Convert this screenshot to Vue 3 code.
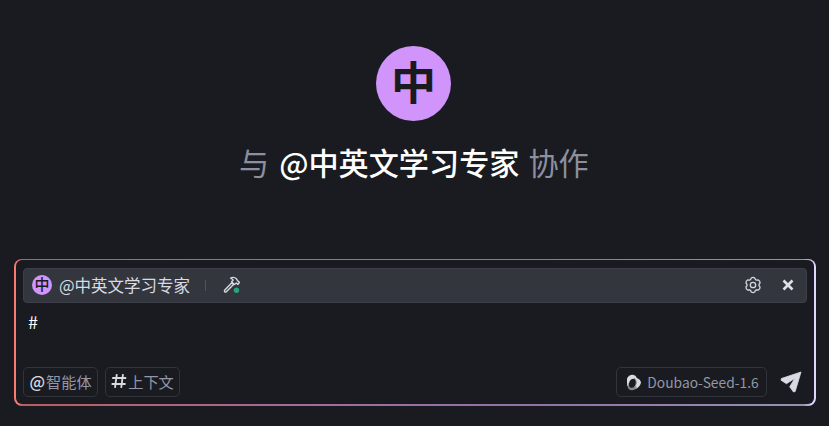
<script setup>
const agent = '中英文学习专家'
</script>

<template>
  <main class="page">
    <div class="avatar">中</div>
    <h1 class="title">
      <span class="with">与</span><strong>@{{ agent }}</strong><span>协作</span>
    </h1>
    <section class="frame">
      <div class="composer">
        <header class="bar">
          <div class="mini">中</div>
          <span class="name">@{{ agent }}</span>
          <i class="sep"></i>
          <svg class="hammer" width="18" height="18" viewBox="0 0 18 18">
            <path d="M1.800 14 8.800 6.800l1.700 1.700-7.200 7.200c-.5.5-1.100.5-1.500 0s-.5-1.200 0-1.700ZM7.600 2.200c2.200-1.300 4.300-.9 5.800.6l1 1.600 2 1.900-1.500 2.200-1.500-1.500-2 1.500-2.800-2.700 1.600-1.700c-.7-1-1.500-1.500-2.600-1.900Z" fill="none" stroke="#d5d8e0" stroke-width="1.400" stroke-linejoin="round" />
            <circle cx="13.500" cy="14.200" r="2.700" fill="#27a77d" />
          </svg>
          <span class="grow"></span>
          <svg class="gear" width="18" height="18" viewBox="0 0 18 18" fill="none" stroke="#d5d8e0" stroke-width="1.300" stroke-linejoin="round">
            <path d="M7.300 2Q9 .9 10.700 2L11.500 3.600 12.600 4.200 14.400 4Q16.200 5 16 7L15 8.400V9.600L16 11Q16.200 13 14.400 14L12.600 13.800 11.500 14.400 10.700 16Q9 17.100 7.300 16L6.500 14.400 5.400 13.800 3.600 14Q1.800 13 2 11L3 9.600V8.400L2 7Q1.800 5 3.600 4L5.400 4.200 6.500 3.600Z" />
            <circle cx="9" cy="9" r="2.700" />
          </svg>
          <svg class="close" width="12" height="12" viewBox="0 0 12 12">
            <path d="m1.500 1.500 9 9M10.500 1.500l-9 9" stroke="#dfe1e8" stroke-width="2.600" />
          </svg>
        </header>
        <div class="input">#</div>
        <footer class="tools">
          <button class="chip">
            <b class="at">@</b><span>智能体</span>
          </button>
          <button class="chip">
            <svg class="hash" width="16" height="16" viewBox="0 0 16 16">
              <path d="M1.200 5h14M.6 11h14M5.800 1.200 4 14.800M12 1.200l-1.800 13.600" stroke="#d9dbe2" stroke-width="1.800" />
            </svg><span>上下文</span>
          </button>
          <span class="grow"></span>
          <button class="chip model">
            <svg width="16" height="17" viewBox="0 0 16 17">
              <path d="M1 12V4.500C2 2 4.500.5 6.800.7 9 1 10.200 2.300 10.700 4c2.200.7 4.300 2.700 4.300 4.700-.8 3.200-3 5.600-6 6.600L6.500 14 3 11.500Z" fill="#d9dbe2" />
              <path d="M2.200 8.500C.5 13 2.500 16.400 6 16.200c2.200-.1 4-1.300 4.700-3L9.500 12 6 13.800 3 12Z" fill="#85878f" />
              <ellipse cx="6.600" cy="9.300" rx="3.500" ry="4.700" transform="rotate(22 6.600 9.300)" fill="#1a1b1f" />
              <path d="M8 4.200C10.800 5.700 10.600 9.800 8.900 13" stroke="#85878f" stroke-width=".9" fill="none" />
            </svg>
            <span class="model-name">Doubao-Seed-1.6</span>
          </button>
          <svg class="send" width="22" height="22" viewBox="0 0 22 22">
            <path d="M21 1 15.200 20.500 13.500 21 9.700 15.800l5-8.300-8.300 5.200L1 9.200l.4-1.700Z" fill="#d9dbe4" stroke="#d9dbe4" stroke-width=".8" stroke-linejoin="round" />
          </svg>
        </footer>
      </div>
    </section>
  </main>
</template>

<style>
body { background: #1a1b20; }
</style>

<style scoped>
.page {
  box-sizing: border-box;
  width: 829px;
  height: 426px;
  padding: 46px 13px 0 14px;
  overflow: hidden;
  background: #1a1b20;
  font-family: "Noto Sans CJK SC", sans-serif;
}
.avatar {
  width: 75px;
  height: 75px;
  margin: 0 0 0 362px;
  border-radius: 50%;
  background: #d094fb;
  color: #1a1b20;
  font-size: 45px;
  font-weight: 700;
  line-height: 69px;
  text-align: center;
}
.title {
  display: flex;
  gap: 9px;
  height: 44px;
  margin: 19px 0 0 225px;
  color: #8b8f9f;
  font-size: 30.150px;
  font-weight: 400;
  line-height: 44px;
  white-space: nowrap;
}
.title strong { color: #fff; font-weight: 500; }
.with { margin-right: 1px; }
.frame {
  box-sizing: border-box;
  height: 147px;
  margin-top: 74.500px;
  padding: 1.500px 2px;
  border-radius: 8px;
  background: linear-gradient(90deg, #fa7970 0, #fa7970 4px, #b95d63 9px, #a56b99 35%, #8f73a8 65%, #9890b3 790px, #dfd5ff 798px);
}
.composer {
  box-sizing: border-box;
  display: flex;
  flex-direction: column;
  height: 100%;
  padding: 8px 7px 7px;
  border-radius: 6px;
  background: #1a1b20;
}
.bar {
  box-sizing: border-box;
  display: flex;
  align-items: center;
  flex-shrink: 0;
  height: 35px;
  padding: 0 12px 1px 8px;
  border: 1px solid #3d4048;
  border-radius: 4px;
  background: #33363d;
}
.mini {
  width: 20px;
  height: 20px;
  border-radius: 50%;
  background: #d094fb;
  color: #1a1b20;
  font-size: 15px;
  font-weight: 500;
  line-height: 18px;
  text-align: center;
}
.name { margin-left: 7px; color: #d9dbe4; font-size: 16.500px; line-height: 24px; }
.sep { width: 1px; height: 11px; margin-left: 15px; background: #50535c; }
.hammer { margin-left: 17px; }
.grow { flex: 1; }
.close { margin-left: 20px; }
.input { flex-shrink: 0; height: 64px; padding: 6px 0 0 5px; box-sizing: border-box; color: #fff; font-size: 18px; line-height: 24px; }
.tools { display: flex; align-items: center; gap: 7px; height: 30px; }
.chip {
  box-sizing: border-box;
  display: flex;
  align-items: center;
  justify-content: center;
  width: 75px;
  height: 30px;
  padding: 0 0 2px;
  border: 1px solid #32343c;
  border-radius: 5px;
  background: transparent;
  color: #9397a7;
  font: 400 15.200px/24px "Noto Sans CJK SC", sans-serif;
  white-space: nowrap;
}
.at { margin-right: 1px; color: #d9dbe2; font-size: 16px; font-weight: 500; }
.hash { margin-right: 1px; }
.model { width: 151px; padding: 0 0 0 2px; gap: 5px; font-size: 13.800px; }
.send { margin: 0 5px 0 6px; }
</style>
